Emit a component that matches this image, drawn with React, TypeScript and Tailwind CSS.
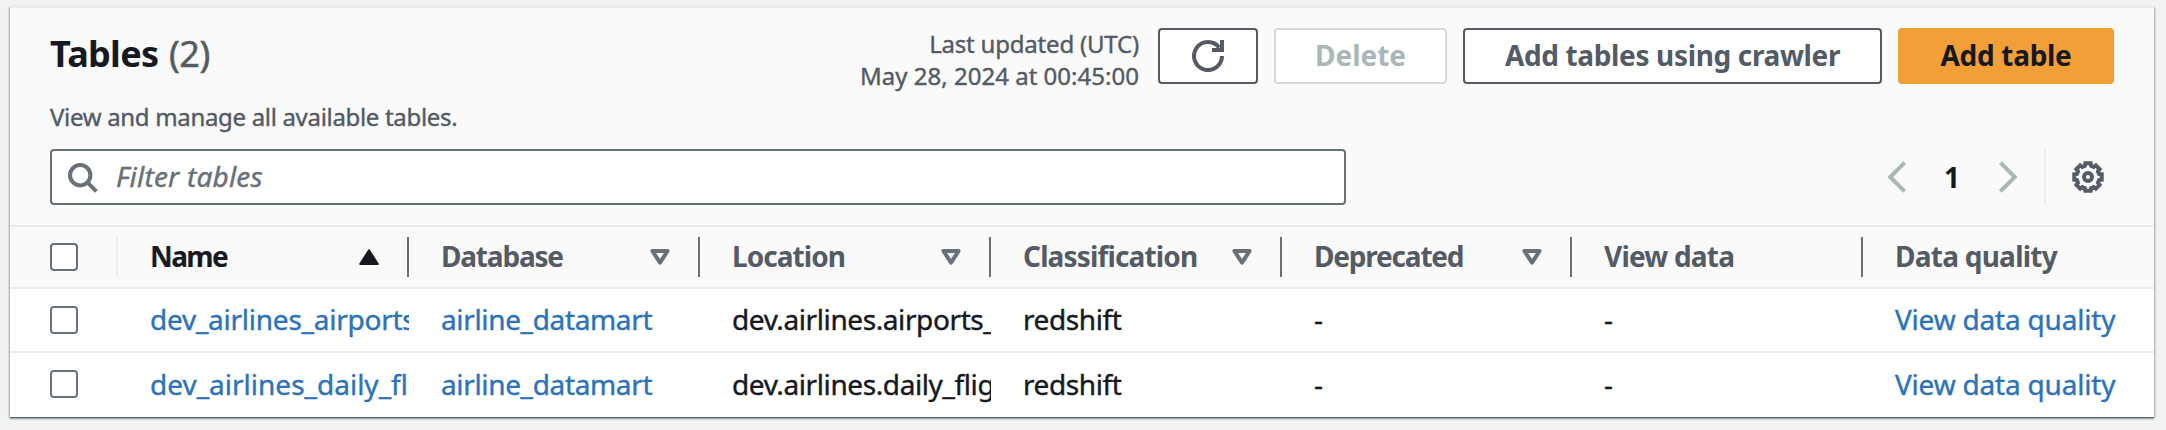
import type { ReactNode } from "react";

const GEAR = (() => {
  const pts: string[] = [];
  for (let i = 0; i < 8; i++) {
    for (const [r, d] of [[5.75, -15.5], [7, -11], [7, 11], [5.75, 15.5]]) {
      const a = ((i * 45 + d) * Math.PI) / 180;
      pts.push(`${(8 + r * Math.cos(a)).toFixed(2)} ${(8 + r * Math.sin(a)).toFixed(2)}`);
    }
  }
  return `M${pts.join("L")}Z`;
})();

const BOLD = "font-bold [-webkit-text-stroke:0px]";

function Icon({ d, className, children }: { d: string; className: string; children?: ReactNode }) {
  return (
    <svg viewBox="0 0 16 16" className={`size-8 shrink-0 ${className}`} fill="none" stroke="currentColor" strokeWidth="2">
      <path d={d} />
      {children}
    </svg>
  );
}

function Checkbox() {
  return <span className="block size-7 rounded-[4px] border-2 border-[#687078] bg-white" />;
}

function Sort({ active }: { active?: boolean }) {
  return active ? (
    <svg viewBox="0 0 20 16" className="h-4 w-5 text-[#16191f]" fill="currentColor" stroke="currentColor" strokeWidth="2" strokeLinejoin="round">
      <path d="M10 1.2L18.8 15H1.2Z" />
    </svg>
  ) : (
    <svg viewBox="0 0 20 16" className="h-4 w-5 text-[#687078]" fill="none" stroke="currentColor" strokeWidth="4" strokeLinejoin="round">
      <path d="M2.4 2H17.6L10 13.6Z" />
    </svg>
  );
}

const GRID = "grid grid-cols-[108px_291px_291px_291px_291px_290px_291px_1fr]";

const COLUMNS = [
  { label: "Name", track: "tracking-[-1.6px]", sort: "asc" },
  { label: "Database", track: "tracking-[-1.2px]", sort: "none" },
  { label: "Location", track: "tracking-[-0.95px]", sort: "none" },
  { label: "Classification", track: "tracking-[-0.85px]", sort: "none" },
  { label: "Deprecated", track: "tracking-[-1.2px]", sort: "none" },
  { label: "View data", track: "tracking-[-0.8px]", sort: "" },
  { label: "Data quality", track: "tracking-[-0.75px]", sort: "" },
];

const ROWS = [
  { name: "dev_airlines_airports", track: "tracking-[-0.25px]", location: "dev.airlines.airports_" },
  { name: "dev_airlines_daily_fl", track: "tracking-[0px]", location: "dev.airlines.daily_flig" },
];

function Cell({ children, className = "" }: { children: ReactNode; className?: string }) {
  return <div className={`overflow-hidden pb-0.5 pl-8 whitespace-nowrap ${className}`}>{children}</div>;
}

export default function App() {
  return (
    <div className="h-[430px] overflow-hidden bg-[#f1f3f3] pt-1.5 pl-2.5 font-['Noto_Sans',sans-serif] text-[28px] leading-[38px] text-[#16191f] [-webkit-text-stroke:0.4px]">
      <div className="h-[411px] w-[2144px] border-t-2 border-[#ebebeb] bg-white shadow-[0_2px_2px_0_rgba(0,28,36,0.3),1px_1px_2px_0_rgba(0,28,36,0.25),-1px_1px_2px_0_rgba(0,28,36,0.25),0_1px_0_0_rgba(0,28,36,0.3)]">
        <div className="h-[217px] bg-[#fafafa] px-10 pt-5">
          <div className="flex h-[73px] items-start justify-between">
            <h2 className={`pt-[4px] text-[36px] leading-[44px] tracking-[-0.7px] ${BOLD}`}>
              Tables <span className="ml-0.5 font-normal tracking-[-0.4px] text-[#545b64] [-webkit-text-stroke:0.5px]">(2)</span>
            </h2>
            <div className="flex items-start">
              <div className="mr-[19px] text-right text-[24px] leading-8 text-[#545b64]">
                <div className="tracking-[-0.2px]">Last updated (UTC)</div>
                <div className="tracking-[0.02px]">May 28, 2024 at 00:45:00</div>
              </div>
              <button className="mr-4 flex h-14 w-[100px] items-center justify-center rounded-[4px] border-2 border-[#545b64] bg-white text-[#545b64]">
                <Icon className="" d="M10 5h5V0M15 8a7 7 0 1 1-1.4-4.2" />
              </button>
              <button className={`mr-4 h-14 w-[173px] rounded-[4px] border-2 border-[#d5dbdb] bg-white pb-0.5 text-[#aab7b8] ${BOLD}`}>Delete</button>
              <button className={`mr-4 h-14 w-[419px] rounded-[4px] border-2 border-[#545b64] bg-white pb-0.5 tracking-[-0.35px] text-[#545b64] ${BOLD}`}>
                Add tables using crawler
              </button>
              <button className={`h-14 w-[216px] rounded-[4px] bg-[#f29f38] pb-0.5 tracking-[-0.3px] ${BOLD}`}>Add table</button>
            </div>
          </div>
          <p className="h-12 text-[24px] leading-8 tracking-[-0.32px] text-[#545b64]">View and manage all available tables.</p>
          <div className="flex h-14 items-center justify-between">
            <div className="flex h-14 w-[1296px] items-center gap-[18px] rounded-[4px] border-2 border-[#687078] bg-white pl-3.5 text-[#687078]">
              <Icon className="" d="M10.7 10.7L15.2 15.2">
                <circle cx="7.1" cy="7.1" r="5.1" />
              </Icon>
              <span className="pb-0.5 tracking-[0.2px] italic">Filter tables</span>
            </div>
            <div className="flex h-14 items-center">
              <Icon className="text-[#aab7b8]" d="M11.3 .8L4.1 8L11.3 15.2" />
              <span className={`w-[78px] pr-0.5 text-center ${BOLD}`}>1</span>
              <Icon className="text-[#aab7b8]" d="M4.2 .8L11.4 8L4.2 15.2" />
              <span className="ml-5 h-14 w-0.5 bg-[#eaeded]" />
              <Icon className="mr-[10px] ml-[26px] text-[#545b64]" d={GEAR}>
                <circle cx="8" cy="8" r="2" />
              </Icon>
            </div>
          </div>
        </div>
        <div className={`${GRID} h-16 items-center border-y-2 border-[#ebebeb] bg-[#fafafa] ${BOLD}`}>
          <div className="flex h-10 items-center border-r-2 border-[#eaeded] pl-10">
            <Checkbox />
          </div>
          {COLUMNS.map((c, i) => (
            <div
              key={c.label}
              className={`flex h-10 items-center justify-between pr-7 pl-8 ${i < 6 ? "border-r-2 border-[#687078]" : ""} ${i === 0 ? "" : "text-[#545b64]"}`}
            >
              <span className={`pb-0.5 whitespace-nowrap ${c.track}`}>{c.label}</span>
              {c.sort && <Sort active={c.sort === "asc"} />}
            </div>
          ))}
        </div>
        {ROWS.map((r, i) => (
          <div key={r.name} className={`${GRID} h-16 items-center ${i === 0 ? "border-b-2 border-[#ebebeb]" : ""}`}>
            <div className={`pl-10 ${i === 1 ? "pb-0.5" : ""}`}>
              <Checkbox />
            </div>
            <Cell className={`text-[#2e73b8] ${r.track}`}>{r.name}</Cell>
            <Cell className="tracking-[-0.35px] text-[#2e73b8]">airline_datamart</Cell>
            <Cell className="tracking-[-0.4px]">{r.location}</Cell>
            <Cell className="tracking-[-0.4px]">redshift</Cell>
            <Cell>-</Cell>
            <Cell>-</Cell>
            <Cell className="tracking-[-0.2px] text-[#2e73b8]">View data quality</Cell>
          </div>
        ))}
      </div>
    </div>
  );
}
